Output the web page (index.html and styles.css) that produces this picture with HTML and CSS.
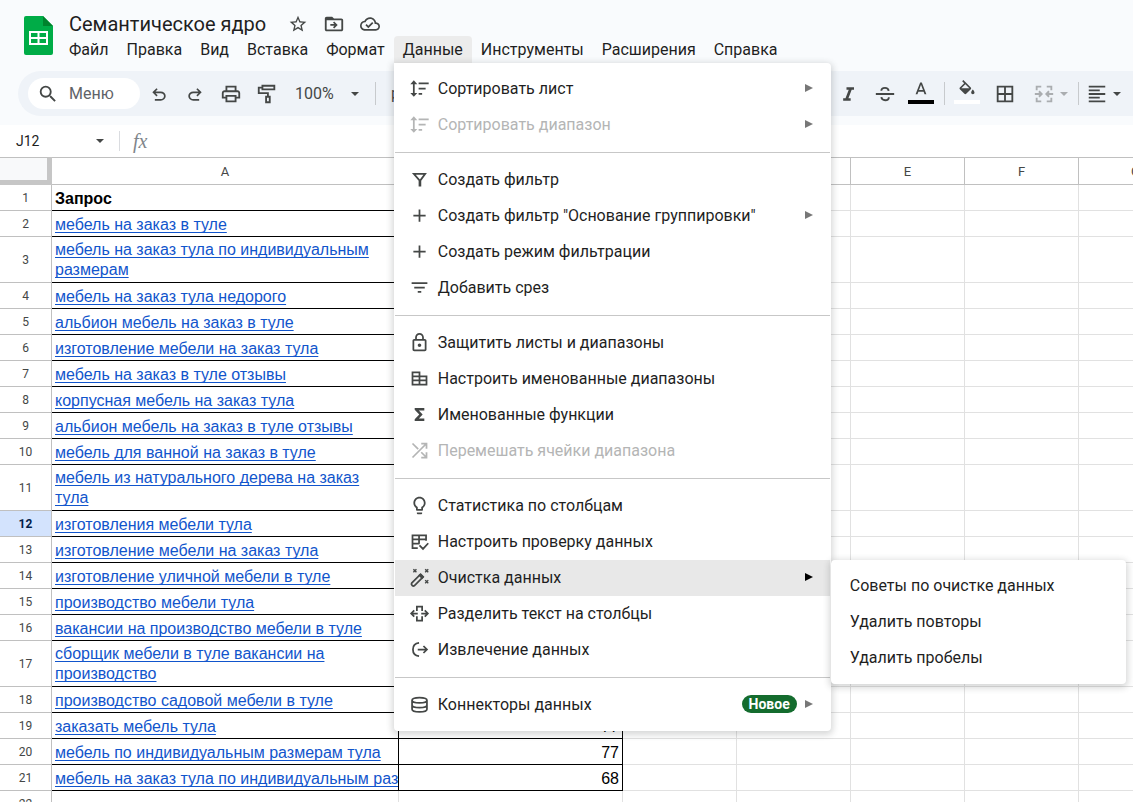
FILE: index.html
```html
<!DOCTYPE html>
<html lang="ru">

<head>
  <meta charset="UTF-8" />
  <meta name="viewport" content="width=device-width, initial-scale=1" />
  <title>Семантическое ядро</title>
  <link rel="stylesheet" href="styles.css">
</head>

<body>
  <!-- icons -->
  <svg class="sprite" aria-hidden="true">
    <symbol id="i-star" viewBox="0 0 24 24"><path d="M22 9.24l-7.19-.62L12 2 9.19 8.63 2 9.24l5.46 4.73L5.82 21 12 17.27 18.18 21l-1.63-7.03L22 9.24zM12 15.4l-3.76 2.27 1-4.28-3.32-2.88 4.38-.38L12 6.1l1.71 4.04 4.38.38-3.32 2.88 1 4.28L12 15.4z"/></symbol>
    <symbol id="i-move" viewBox="0 0 24 24"><path d="M20 6h-8l-2-2H4c-1.1 0-2 .9-2 2v12c0 1.1.9 2 2 2h16c1.1 0 2-.9 2-2V8c0-1.100-.9-2-2-2zm0 12H4V8h16v10zM12.200 9.200l-1.300 1.300 1.600 1.600H8v1.800h4.500l-1.600 1.600 1.300 1.300L16 13z"/></symbol>
    <symbol id="i-cloud" viewBox="0 0 24 24"><path d="M19.350 10.040C18.670 6.590 15.640 4 12 4 9.110 4 6.600 5.640 5.350 8.040 2.340 8.360 0 10.910 0 14c0 3.310 2.690 6 6 6h13c2.760 0 5-2.240 5-5 0-2.640-2.050-4.780-4.650-4.960zM19 18H6c-2.210 0-4-1.790-4-4s1.790-4 4-4h.71C7.370 7.690 9.480 6 12 6c3.040 0 5.500 2.460 5.500 5.500v.5H19c1.660 0 3 1.340 3 3s-1.340 3-3 3zm-9-3.820l-2.090-2.090L6.500 13.500 10 17l6.010-6.010-1.410-1.410z"/></symbol>
    <symbol id="i-search" viewBox="0 0 24 24"><path d="M15.500 14h-.79l-.28-.27A6.470 6.470 0 0 0 16 9.500 6.500 6.500 0 1 0 9.500 16c1.610 0 3.090-.59 4.230-1.570l.27.28v.79l5 4.990L20.490 19l-4.990-5zm-6 0C7.010 14 5 11.990 5 9.500S7.010 5 9.500 5 14 7.010 14 9.500 11.990 14 9.500 14z"/></symbol>
    <symbol id="i-undo" viewBox="0 0 24 24"><path d="M7 20v-2h7.100c1.050 0 1.960-.33 2.740-1 .78-.67 1.160-1.500 1.160-2.500s-.38-1.830-1.160-2.500c-.78-.67-1.690-1-2.740-1H7.800l2.600 2.600L9 15l-5-5 5-5 1.400 1.400L7.800 9h6.300c1.620 0 3 .53 4.160 1.580C19.420 11.620 20 12.930 20 14.500s-.58 2.880-1.740 3.930C17.100 19.480 15.720 20 14.100 20z"/></symbol>
    <symbol id="i-print" viewBox="0 0 24 24"><path d="M19 8h-1V3H6v5H5c-1.660 0-3 1.340-3 3v6h4v4h12v-4h4v-6c0-1.660-1.340-3-3-3zM8 5h8v3H8V5zm8 12v2H8v-4h8v2zm2-2v-2H6v2H4v-4c0-.55.45-1 1-1h14c.55 0 1 .45 1 1v4h-2z"/></symbol>
    <symbol id="i-paint" viewBox="0 0 24 24"><path fill="none" stroke="currentColor" stroke-width="2" d="M7 3h13v4H7zM7 5H3v6h10v4M11 15h4v6h-4z"/></symbol>
    <symbol id="i-caret" viewBox="0 0 10 10"><path d="M1 3h8L5 7z"/></symbol>
    <symbol id="i-italic" viewBox="0 0 24 24"><path d="M9 4v3h2.700l-3.900 10H5v3h9v-3h-2.700l3.900-10H18V4z"/></symbol>
    <symbol id="i-strike" viewBox="0 0 24 24"><path fill="none" stroke="currentColor" stroke-width="2" d="M2 12h20M16 8.500c-.3-2-1.900-3.200-4-3.200-2.300 0-4 1.200-4 3.200M8 15.500c.3 2.100 1.900 3.300 4.200 3.300 2.400 0 4-1.200 4-3.300"/></symbol>
    <symbol id="i-color" viewBox="0 0 24 24"><path d="M11 3L5.500 17h2.250l1.120-3h6.250l1.120 3h2.250L13 3h-2zm-1.380 9L12 5.670 14.380 12H9.620z"/></symbol>
    <symbol id="i-fill" viewBox="0 0 24 24"><path d="M16.560 8.940L7.620 0 6.210 1.410l2.380 2.380-5.150 5.150c-.59.59-.59 1.540 0 2.120l5.500 5.500c.29.29.68.44 1.060.44s.77-.15 1.060-.44l5.500-5.500c.59-.58.59-1.530 0-2.120zM5.210 10L10 5.210 14.790 10H5.210zM19 11.500s-2 2.170-2 3.500c0 1.100.9 2 2 2s2-.9 2-2c0-1.330-2-3.500-2-3.500z"/></symbol>
    <symbol id="i-borders" viewBox="0 0 24 24"><path d="M3 3v18h18V3H3zm8 16H5v-6h6v6zm0-8H5V5h6v6zm8 8h-6v-6h6v6zm0-8h-6V5h6v6z"/></symbol>
    <symbol id="i-merge" viewBox="0 0 24 24"><path fill="none" stroke="currentColor" stroke-width="2" d="M9 4H4v4M4 16v4h5M15 4h5v4M20 16v4h-5M2 12h7M6.500 9l3 3-3 3M22 12h-7M17.500 9l-3 3 3 3"/></symbol>
    <symbol id="i-align" viewBox="0 0 24 24"><path d="M3 3h18v2H3zM3 7h12v2H3zM3 11h18v2H3zM3 15h12v2H3zM3 19h18v2H3z"/></symbol>
    <symbol id="i-sort" viewBox="0 0 24 24"><path d="M5.500 2.500L1.500 7h3v10h-3l4 4.500 4-4.500h-3V7h3zM11 5h11.500v2H11zM11 11h8v2h-8zM11 17h4v2h-4z"/></symbol>
    <symbol id="i-filter" viewBox="0 0 24 24"><path fill="none" stroke="currentColor" stroke-width="2" d="M13 20v-7l5.500-7.500h-13L12 13v7"/></symbol>
    <symbol id="i-plus" viewBox="0 0 24 24"><path d="M19 13h-6v6h-2v-6H5v-2h6V5h2v6h6v2z"/></symbol>
    <symbol id="i-slice" viewBox="0 0 24 24"><path d="M3 6h18v2H3zM6 11h12v2H6zM10 16h4v2h-4z"/></symbol>
    <symbol id="i-lock" viewBox="0 0 24 24"><path d="M18 8h-1V6c0-2.760-2.240-5-5-5S7 3.240 7 6v2H6c-1.100 0-2 .9-2 2v10c0 1.100.9 2 2 2h12c1.100 0 2-.9 2-2V10c0-1.100-.9-2-2-2zM9 6c0-1.660 1.340-3 3-3s3 1.340 3 3v2H9V6zm9 14H6V10h12v10zm-6-3c1.100 0 2-.9 2-2s-.9-2-2-2-2 .9-2 2 .9 2 2 2z"/></symbol>
    <symbol id="i-ranges" viewBox="0 0 24 24"><path fill="none" stroke="currentColor" stroke-width="2" d="M4 5h8v14H4zM12 9.500h8V19h-8M4 9.500h8M4 14h16"/></symbol>
    <symbol id="i-sigma" viewBox="0 0 24 24"><path d="M17.500 4.500h-11v2.200l5.200 5.300-5.200 5.300v2.200h11v-3h-6.200L15.600 12l-4.300-4.500h6.200z"/></symbol>
    <symbol id="i-shuffle" viewBox="0 0 24 24"><path fill="none" stroke="currentColor" stroke-width="2" d="M4 4l6.500 6.500M4 20L20 4M14 4h6v6M14 14l6 6M20 14v6h-6"/></symbol>
    <symbol id="i-bulb" viewBox="0 0 24 24"><path d="M9 21c0 .55.45 1 1 1h4c.55 0 1-.45 1-1v-1H9v1zm3-19C8.140 2 5 5.140 5 9c0 2.380 1.190 4.470 3 5.740V17c0 .55.45 1 1 1h6c.55 0 1-.45 1-1v-2.260c1.810-1.270 3-3.360 3-5.740 0-3.860-3.140-7-7-7zm2.850 11.100l-.85.6V16h-4v-2.300l-.85-.6A4.997 4.997 0 0 1 7 9c0-2.760 2.240-5 5-5s5 2.240 5 5c0 1.630-.8 3.160-2.150 4.100z"/></symbol>
    <symbol id="i-check" viewBox="0 0 24 24"><path fill="none" stroke="currentColor" stroke-width="2" d="M10 19.500H4V5h15.500v6M4 9.500h15.500M4 14.500h8M11.500 5v9.500M12 16.500l4 4 6-6.500"/></symbol>
    <symbol id="i-wand" viewBox="0 0 24 24"><path fill="none" stroke="currentColor" stroke-width="2" d="M3 18.500L13 8.500l3 3L6 21.500c-1.500 1-4-1.500-3-3z"/><path d="M10.500 9.500L13.500 7l4 4-2.500 3z"/><path fill="none" stroke="currentColor" stroke-width="1.600" d="M5 2.500l3.500 3.500M8.500 2.500L5 6M18.500 2.500L22 6M22 2.500L18.500 6M18.500 15l3.500 3.500M22 15l-3.500 3.500"/></symbol>
    <symbol id="i-split" viewBox="0 0 24 24"><path fill="none" stroke="currentColor" stroke-width="2" d="M9 9V4h6v5M9 15v5h6v-5M10 12H2.500M6 8.500L2.500 12 6 15.500M14 12h7.500M18 8.500l3.500 3.500-3.500 3.500"/></symbol>
    <symbol id="i-extract" viewBox="0 0 24 24"><path fill="none" stroke="currentColor" stroke-width="2" d="M11.500 4.500c-4.300.4-7 3.500-7 7.500s2.700 7.100 7 7.500M10 12h10.500M16.500 8l4 4-4 4"/></symbol>
    <symbol id="i-data" viewBox="0 0 24 24"><path fill="none" stroke="currentColor" stroke-width="2" d="M3.500 7c0-2 3.800-3 8.500-3s8.500 1 8.500 3-3.800 3-8.500 3-8.500-1-8.500-3zM3.500 7v10.500c0 2 3.800 3 8.500 3s8.500-1 8.500-3V7M3.500 12.500c0 2 3.800 3 8.500 3s8.500-1 8.500-3"/></symbol>
    <symbol id="i-right" viewBox="0 0 8 8"><path d="M0 0l8 4-8 4z"/></symbol>
  </svg>

  <header class="header">
    <div class="top">
      <svg class="logo" viewBox="0 0 29 39" aria-hidden="true">
        <path fill="#00ac47" d="M2 0h17l10 10v27a2 2 0 0 1-2 2H2a2 2 0 0 1-2-2V2a2 2 0 0 1 2-2z"/>
        <path fill="#00832d" d="M19 0l10 10H19z"/>
        <path fill="#fff" fill-rule="evenodd" d="M5 15h19v14H5zM7 17v4h6.500v-4zM15.500 17v4H22v-4zM7 23v4h6.500v-4zM15.500 23v4H22v-4z"/>
      </svg>
      <div class="heading">
        <div class="title-row">
          <h1 class="title">Семантическое ядро</h1>
          <button class="title-btn" aria-label="Пометить"><svg class="icon small"><use href="#i-star"/></svg></button>
          <button class="title-btn" aria-label="Переместить"><svg class="icon"><use href="#i-move"/></svg></button>
          <button class="title-btn" aria-label="Статус документа"><svg class="icon small"><use href="#i-cloud"/></svg></button>
        </div>
        <nav class="menubar">
          <button class="menubar-btn">Файл</button>
          <button class="menubar-btn">Правка</button>
          <button class="menubar-btn">Вид</button>
          <button class="menubar-btn">Вставка</button>
          <button class="menubar-btn">Формат</button>
          <div class="menu-anchor">
            <button class="menubar-btn open">Данные</button>
            <div class="menu">
              <button class="item"><svg class="icon"><use href="#i-sort"/></svg><span class="label">Сортировать лист</span><svg class="more"><use href="#i-right"/></svg></button>
              <button class="item" disabled><svg class="icon"><use href="#i-sort"/></svg><span class="label">Сортировать диапазон</span><svg class="more"><use href="#i-right"/></svg></button>
              <hr class="line">
              <button class="item"><svg class="icon"><use href="#i-filter"/></svg><span class="label">Создать фильтр</span></button>
              <button class="item"><svg class="icon"><use href="#i-plus"/></svg><span class="label">Создать фильтр "Основание группировки"</span><svg class="more"><use href="#i-right"/></svg></button>
              <button class="item"><svg class="icon"><use href="#i-plus"/></svg><span class="label">Создать режим фильтрации</span></button>
              <button class="item"><svg class="icon"><use href="#i-slice"/></svg><span class="label">Добавить срез</span></button>
              <hr class="line">
              <button class="item"><svg class="icon"><use href="#i-lock"/></svg><span class="label">Защитить листы и диапазоны</span></button>
              <button class="item"><svg class="icon"><use href="#i-ranges"/></svg><span class="label">Настроить именованные диапазоны</span></button>
              <button class="item"><svg class="icon"><use href="#i-sigma"/></svg><span class="label">Именованные функции</span></button>
              <button class="item" disabled><svg class="icon"><use href="#i-shuffle"/></svg><span class="label">Перемешать ячейки диапазона</span></button>
              <hr class="line">
              <button class="item"><svg class="icon"><use href="#i-bulb"/></svg><span class="label">Статистика по столбцам</span></button>
              <button class="item"><svg class="icon"><use href="#i-check"/></svg><span class="label">Настроить проверку данных</span></button>
              <div class="sub-anchor">
                <button class="item active"><svg class="icon"><use href="#i-wand"/></svg><span class="label">Очистка данных</span><svg class="more"><use href="#i-right"/></svg></button>
                <div class="submenu">
                  <button class="item">Советы по очистке данных</button>
                  <button class="item">Удалить повторы</button>
                  <button class="item">Удалить пробелы</button>
                </div>
              </div>
              <button class="item"><svg class="icon"><use href="#i-split"/></svg><span class="label">Разделить текст на столбцы</span></button>
              <button class="item"><svg class="icon"><use href="#i-extract"/></svg><span class="label">Извлечение данных</span></button>
              <hr class="line">
              <button class="item"><svg class="icon"><use href="#i-data"/></svg><span class="label">Коннекторы данных</span><span class="new">Новое</span><svg class="more"><use href="#i-right"/></svg></button>
            </div>
          </div>
          <button class="menubar-btn">Инструменты</button>
          <button class="menubar-btn">Расширения</button>
          <button class="menubar-btn">Справка</button>
        </nav>
      </div>
    </div>

    <div class="toolbar">
      <label class="search">
        <svg class="icon"><use href="#i-search"/></svg>
        <input type="text" class="search-input" placeholder="Меню" aria-label="Меню">
      </label>
      <button class="tool" aria-label="Отменить"><svg class="icon small"><use href="#i-undo"/></svg></button>
      <button class="tool" aria-label="Повторить"><svg class="icon small flip"><use href="#i-undo"/></svg></button>
      <button class="tool" aria-label="Печать"><svg class="icon"><use href="#i-print"/></svg></button>
      <button class="tool" aria-label="Копировать форматирование"><svg class="icon"><use href="#i-paint"/></svg></button>
      <button class="zoom">100%<svg class="caret"><use href="#i-caret"/></svg></button>
      <span class="divider"></span>
      <button class="tool currency">р.</button>
      <span class="space"></span>
      <button class="tool" aria-label="Курсив"><svg class="icon small"><use href="#i-italic"/></svg></button>
      <button class="tool" aria-label="Зачеркнутый"><svg class="icon"><use href="#i-strike"/></svg></button>
      <button class="tool swatch black" aria-label="Цвет текста"><svg class="icon small"><use href="#i-color"/></svg></button>
      <span class="divider"></span>
      <button class="tool swatch white" aria-label="Цвет заливки"><svg class="icon small"><use href="#i-fill"/></svg></button>
      <button class="tool" aria-label="Границы"><svg class="icon"><use href="#i-borders"/></svg></button>
      <button class="tool wide merge" disabled aria-label="Объединить ячейки"><svg class="icon"><use href="#i-merge"/></svg><svg class="caret"><use href="#i-caret"/></svg></button>
      <span class="divider"></span>
      <button class="tool wide align" aria-label="Выравнивание"><svg class="icon"><use href="#i-align"/></svg><svg class="caret"><use href="#i-caret"/></svg></button>
    </div>
  </header>

  <div class="formula">
    <button class="cell-name">J12<svg class="caret"><use href="#i-caret"/></svg></button>
    <span class="fx">fx</span>
  </div>

  <main class="sheet">
    <table class="grid">
      <colgroup>
        <col class="c-num"><col class="c-a"><col class="c-b"><col class="c"><col class="c"><col class="c"><col class="c"><col class="c">
      </colgroup>
      <thead>
        <tr><th class="corner"></th><th>A</th><th></th><th></th><th></th><th>E</th><th>F</th><th>G</th></tr>
      </thead>
      <tbody>
        <tr><th>1</th><td class="data bold">Запрос</td><td class="data"></td><td></td><td></td><td></td><td></td><td></td></tr>
        <tr><th>2</th><td class="data"><a href="#">мебель на заказ в туле</a></td><td class="data"></td><td></td><td></td><td></td><td></td><td></td></tr>
        <tr class="tall"><th>3</th><td class="data"><a href="#">мебель на заказ тула по индивидуальным размерам</a></td><td class="data"></td><td></td><td></td><td></td><td></td><td></td></tr>
        <tr><th>4</th><td class="data"><a href="#">мебель на заказ тула недорого</a></td><td class="data"></td><td></td><td></td><td></td><td></td><td></td></tr>
        <tr><th>5</th><td class="data"><a href="#">альбион мебель на заказ в туле</a></td><td class="data"></td><td></td><td></td><td></td><td></td><td></td></tr>
        <tr><th>6</th><td class="data"><a href="#">изготовление мебели на заказ тула</a></td><td class="data"></td><td></td><td></td><td></td><td></td><td></td></tr>
        <tr><th>7</th><td class="data"><a href="#">мебель на заказ в туле отзывы</a></td><td class="data"></td><td></td><td></td><td></td><td></td><td></td></tr>
        <tr><th>8</th><td class="data"><a href="#">корпусная мебель на заказ тула</a></td><td class="data"></td><td></td><td></td><td></td><td></td><td></td></tr>
        <tr><th>9</th><td class="data"><a href="#">альбион мебель на заказ в туле отзывы</a></td><td class="data"></td><td></td><td></td><td></td><td></td><td></td></tr>
        <tr><th>10</th><td class="data"><a href="#">мебель для ванной на заказ в туле</a></td><td class="data"></td><td></td><td></td><td></td><td></td><td></td></tr>
        <tr class="tall"><th>11</th><td class="data"><a href="#">мебель из натурального дерева на заказ тула</a></td><td class="data"></td><td></td><td></td><td></td><td></td><td></td></tr>
        <tr><th class="current">12</th><td class="data"><a href="#">изготовления мебели тула</a></td><td class="data"></td><td></td><td></td><td></td><td></td><td></td></tr>
        <tr><th>13</th><td class="data"><a href="#">изготовление мебели на заказ тула</a></td><td class="data"></td><td></td><td></td><td></td><td></td><td></td></tr>
        <tr><th>14</th><td class="data"><a href="#">изготовление уличной мебели в туле</a></td><td class="data"></td><td></td><td></td><td></td><td></td><td></td></tr>
        <tr><th>15</th><td class="data"><a href="#">производство мебели тула</a></td><td class="data"></td><td></td><td></td><td></td><td></td><td></td></tr>
        <tr><th>16</th><td class="data"><a href="#">вакансии на производство мебели в туле</a></td><td class="data"></td><td></td><td></td><td></td><td></td><td></td></tr>
        <tr class="tall"><th>17</th><td class="data"><a href="#">сборщик мебели в туле вакансии на производство</a></td><td class="data"></td><td></td><td></td><td></td><td></td><td></td></tr>
        <tr><th>18</th><td class="data"><a href="#">производство садовой мебели в туле</a></td><td class="data"></td><td></td><td></td><td></td><td></td><td></td></tr>
        <tr><th>19</th><td class="data"><a href="#">заказать мебель тула</a></td><td class="data num">77</td><td></td><td></td><td></td><td></td><td></td></tr>
        <tr><th>20</th><td class="data"><a href="#">мебель по индивидуальным размерам тула</a></td><td class="data num">77</td><td></td><td></td><td></td><td></td><td></td></tr>
        <tr><th>21</th><td class="data"><a href="#">мебель на заказ тула по индивидуальным размерам</a></td><td class="data num">68</td><td></td><td></td><td></td><td></td><td></td></tr>
        <tr><th>22</th><td></td><td></td><td></td><td></td><td></td><td></td><td></td></tr>
      </tbody>
    </table>
  </main>
</body>

</html>
```
FILE: styles.css
```css
* {
  box-sizing: border-box;
}

body {
  margin: 0;
  height: 100vh;
  display: flex;
  flex-direction: column;
  overflow: hidden;
  background: #fff;
  color: #1f1f1f;
  font-family: Roboto, "Liberation Sans", sans-serif;
  font-size: 16px;
}

button {
  margin: 0;
  padding: 0;
  border: none;
  background: none;
  color: inherit;
  font: inherit;
  cursor: pointer;
}

.sprite {
  display: none;
}

.icon {
  flex: none;
  width: 22px;
  height: 22px;
  fill: currentColor;
  color: #444746;
}

.icon.small {
  width: 20px;
  height: 20px;
}

.flip {
  transform: scaleX(-1);
}

.caret {
  width: 10px;
  height: 10px;
  fill: #444746;
}

/* header */
.header {
  position: relative;
  z-index: 2;
  background: #f9fbfd;
  padding-bottom: 9px;
}

.top {
  display: flex;
  padding-left: 24px;
}

.logo {
  flex: none;
  width: 29px;
  height: 39px;
  margin-top: 16px;
}

.heading {
  padding-left: 7px;
}

.title-row {
  display: flex;
  align-items: center;
  height: 36px;
  padding: 12px 0 0 9px;
}

.title {
  margin: 0 14px 0 0;
  font-size: 20px;
  font-weight: 400;
  line-height: 24px;
}

.title-btn {
  display: flex;
  justify-content: center;
  width: 36px;
}

.menubar {
  display: flex;
}

.menubar-btn {
  height: 27px;
  padding: 0 9px;
  border-radius: 4px 4px 0 0;
  white-space: nowrap;
}

.menubar-btn.open {
  background: #ececec;
}

.menu-anchor,
.sub-anchor {
  position: relative;
}

/* menus */
.menu,
.submenu {
  position: absolute;
  border-radius: 4px;
  background: #fff;
  box-shadow: 0 2px 6px 2px rgba(60, 64, 67, 0.2);
}

.menu {
  top: 100%;
  left: 0;
  width: 437px;
  padding: 8px 1px;
  border-radius: 0 4px 4px 4px;
}

.submenu {
  top: 0;
  left: 100%;
  width: 295px;
  margin-left: 1px;
  padding: 8px 0;
}

.item {
  display: flex;
  align-items: center;
  gap: 8px;
  width: 100%;
  height: 36px;
  padding: 0 17px 2px 14px;
  text-align: left;
  white-space: nowrap;
}

.item .icon {
  width: 21px;
  height: 21px;
}

.submenu .item {
  padding-left: 19px;
}

.item:hover,
.item.active {
  background: #e8e8e8;
}

.submenu .item:hover {
  background: #f1f3f4;
}

.item:disabled,
.item:disabled .icon {
  color: #b4b5b5;
  background: none;
}

.label {
  flex: 1;
}

.more {
  width: 8px;
  height: 8px;
  fill: #777;
}

.active .more {
  fill: #000;
}

.line {
  height: 1px;
  margin: 9px 0;
  border: none;
  background: #c7c7c7;
}

.new {
  padding: 0 7px;
  border-radius: 9px;
  background: #146c2e;
  color: #fff;
  font-size: 14px;
  font-weight: 700;
  line-height: 18px;
}

/* toolbar */
.toolbar {
  display: flex;
  align-items: center;
  height: 45px;
  margin: 8px 0 0 18px;
  padding-left: 10px;
  border-radius: 23px 0 0 23px;
  background: #eff3f8;
  color: #444746;
}

.search {
  display: flex;
  align-items: center;
  width: 112px;
  height: 31px;
  margin-right: 1px;
  padding-left: 9px;
  gap: 10px;
  border-radius: 16px;
  background: #fff;
}

.search-input {
  width: 60px;
  padding: 0;
  border: none;
  outline: none;
  background: none;
  color: #444746;
  font: inherit;
}

.search-input::placeholder {
  color: #5f6368;
}

.tool {
  display: flex;
  align-items: center;
  justify-content: center;
  width: 36px;
  height: 32px;
}

.zoom {
  display: flex;
  align-items: center;
  gap: 16px;
  padding: 0 15px 0 10px;
}

.divider {
  width: 1px;
  height: 23px;
  background: #c7cacd;
}

.currency {
  margin-left: 4px;
}

.space {
  flex: 1;
}

.swatch {
  flex-direction: column;
  padding-bottom: 3px;
}

.swatch::after {
  content: "";
  width: 26px;
  height: 4px;
}

.black {
  margin-right: 5px;
}

.black::after {
  background: #000;
}

.white {
  margin: 0 2px 0 4px;
}

.white::after {
  background: #fff;
}

.wide {
  width: 50px;
  gap: 4px;
}

.wide:disabled {
  opacity: 0.4;
}

.merge {
  margin: 0 2px 0 3px;
}

.align {
  margin-right: 4px;
}

/* formula bar */
.formula {
  display: flex;
  align-items: center;
  height: 32px;
  font-size: 14px;
}

.cell-name {
  display: flex;
  align-items: center;
  justify-content: space-between;
  width: 120px;
  height: 20px;
  padding: 0 14px 0 16px;
  border-right: 1px solid #dadce0;
}

.fx {
  padding-left: 13px;
  color: #80868b;
  font-family: "Liberation Serif", serif;
  font-size: 20px;
  font-style: italic;
}

/* sheet */
.sheet {
  flex: 1;
  overflow: hidden;
}

.grid {
  width: 1193px;
  table-layout: fixed;
  border-collapse: separate;
  border-spacing: 0;
}

.c-num {
  width: 52px;
}

.c-a {
  width: 347px;
}

.c-b {
  width: 224px;
}

.c {
  width: 114px;
}

.grid th {
  height: 26px;
  padding: 0;
  border-right: 1px solid #c0c0c0;
  border-bottom: 1px solid #c0c0c0;
  color: #444746;
  font-size: 12px;
  font-weight: 400;
}

.grid thead th {
  height: 28px;
  border-top: 1px solid #c0c0c0;
  font-size: 13px;
}

.grid thead .corner {
  border-right: 5px solid #c6c6c6;
  border-bottom: 5px solid #c6c6c6;
  background: #f8f9fa;
}

.grid .current {
  background: #d3e3fd;
  color: #041e49;
  font-weight: 700;
}

.grid td {
  height: 26px;
  padding: 0 3px 1px;
  border-right: 1px solid #e1e1e1;
  border-bottom: 1px solid #e1e1e1;
  color: #000;
  font-family: "Liberation Sans", Arial, sans-serif;
  line-height: 20px;
  vertical-align: bottom;
  white-space: nowrap;
  overflow: hidden;
}

.grid .tall td {
  height: 46px;
  padding-bottom: 2px;
  white-space: normal;
}

.grid .data {
  border-color: #000;
}

.grid .bold {
  font-weight: 700;
}

.grid .num {
  text-align: right;
}

.grid a {
  color: #1155cc;
  text-underline-offset: 2px;
  text-decoration-skip-ink: none;
}
```
